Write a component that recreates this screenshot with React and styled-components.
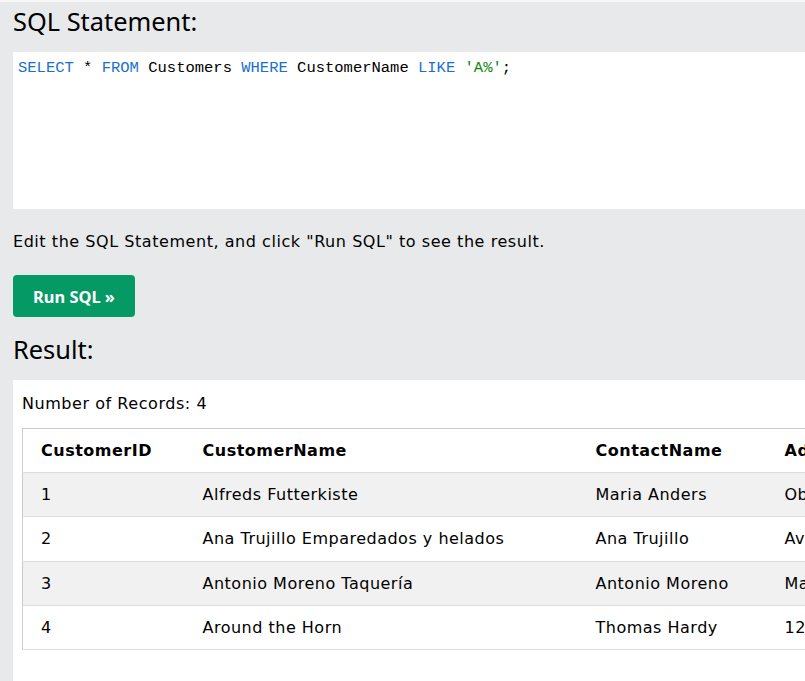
import React from 'react';
import styled, { createGlobalStyle } from 'styled-components';

const GlobalStyle = createGlobalStyle`
  html, body {
    margin: 0;
    padding: 0;
    background: #e7e9eb;
    overflow: hidden;
  }
`;

const rows = [
  { id: 1, name: 'Alfreds Futterkiste', contact: 'Maria Anders', address: 'Obere Str. 57' },
  { id: 2, name: 'Ana Trujillo Emparedados y helados', contact: 'Ana Trujillo', address: 'Avda. de la Constitución 2222' },
  { id: 3, name: 'Antonio Moreno Taquería', contact: 'Antonio Moreno', address: 'Mataderos 2312' },
  { id: 4, name: 'Around the Horn', contact: 'Thomas Hardy', address: '120 Hanover Sq.' },
];

export default function App() {
  return (
    <Page>
      <GlobalStyle />
      <Heading>SQL Statement:</Heading>
      <CodeBox>
        <Kw>SELECT</Kw> * <Kw>FROM</Kw> Customers <Kw>WHERE</Kw> CustomerName <Kw>LIKE</Kw>{' '}
        <Str>'A%'</Str>;
      </CodeBox>
      <Hint>Edit the SQL Statement, and click "Run SQL" to see the result.</Hint>
      <RunButton>Run SQL »</RunButton>
      <Heading $result>Result:</Heading>
      <ResultPanel>
        <Count>Number of Records: 4</Count>
        <Table>
          <colgroup>
            <col style={{ width: 162 }} />
            <col style={{ width: 393 }} />
            <col style={{ width: 189 }} />
            <col style={{ width: 320 }} />
          </colgroup>
          <thead>
            <tr>
              <Th>CustomerID</Th>
              <Th>CustomerName</Th>
              <Th>ContactName</Th>
              <Th>Address</Th>
            </tr>
          </thead>
          <tbody>
            {rows.map((r, i) => (
              <Row key={r.id} $shaded={i % 2 === 0}>
                <Td>{r.id}</Td>
                <Td>{r.name}</Td>
                <Td>{r.contact}</Td>
                <Td>{r.address}</Td>
              </Row>
            ))}
          </tbody>
        </Table>
      </ResultPanel>
    </Page>
  );
}

const Page = styled.div`
  border-top: 2px solid #f5f5f5;
  padding-left: 13px;
  width: 1200px;
  min-height: 700px;
  background: #e7e9eb;
`;

const Heading = styled.h2`
  margin: ${(p) => (p.$result ? '14px 0 13px' : '1px 0 13px')};
  font-family: 'Noto Sans', 'Open Sans', sans-serif;
  font-weight: 400;
  font-size: 25.4px;
  line-height: 36px;
  color: #000;
`;

const CodeBox = styled.div`
  background: #fff;
  height: 157px;
  box-sizing: border-box;
  padding: 6px 5px;
  font-family: 'Liberation Mono', 'DejaVu Sans Mono', monospace;
  font-size: 15.5px;
  line-height: 20px;
  color: #000;
  white-space: pre;
`;

const Kw = styled.span`
  color: #1a6fd1;
`;

const Str = styled.span`
  color: #0f8a0f;
`;

const Hint = styled.p`
  margin: 23px 0 23px;
  font-family: 'DejaVu Sans', Verdana, sans-serif;
  font-size: 16px;
  letter-spacing: 0.55px;
  line-height: 20px;
  color: #000;
`;

const RunButton = styled.button`
  display: block;
  width: 122px;
  height: 42px;
  border: none;
  border-radius: 4px;
  background: #059a65;
  color: #fff;
  font-family: 'Noto Sans', 'Open Sans', sans-serif;
  font-weight: 700;
  font-size: 16.4px;
  cursor: pointer;
  padding: 0;
`;

const ResultPanel = styled.div`
  background: #fff;
  padding: 14px 9px 40px;
`;

const Count = styled.div`
  font-family: 'DejaVu Sans', Verdana, sans-serif;
  font-size: 16px;
  letter-spacing: 0.55px;
  line-height: 20px;
  color: #000;
  margin-bottom: 14px;
`;

const Table = styled.table`
  border-collapse: collapse;
  table-layout: fixed;
  width: 1064px;
  border-top: 1px solid #ccc;
  border-left: 1px solid #ccc;
  font-family: 'DejaVu Sans', Verdana, sans-serif;
  font-size: 16px;
  letter-spacing: 0.5px;
  color: #000;
`;

const Row = styled.tr`
  background: ${(p) => (p.$shaded ? '#f1f1f1' : '#fff')};
`;

const Th = styled.th`
  text-align: left;
  font-weight: 700;
  padding: 12px 18px;
  line-height: 19.2px;
  border-bottom: 1px solid #ddd;
  white-space: nowrap;
`;

const Td = styled.td`
  padding: 12px 18px;
  line-height: 19.2px;
  border-bottom: 1px solid #ddd;
  white-space: nowrap;
`;
